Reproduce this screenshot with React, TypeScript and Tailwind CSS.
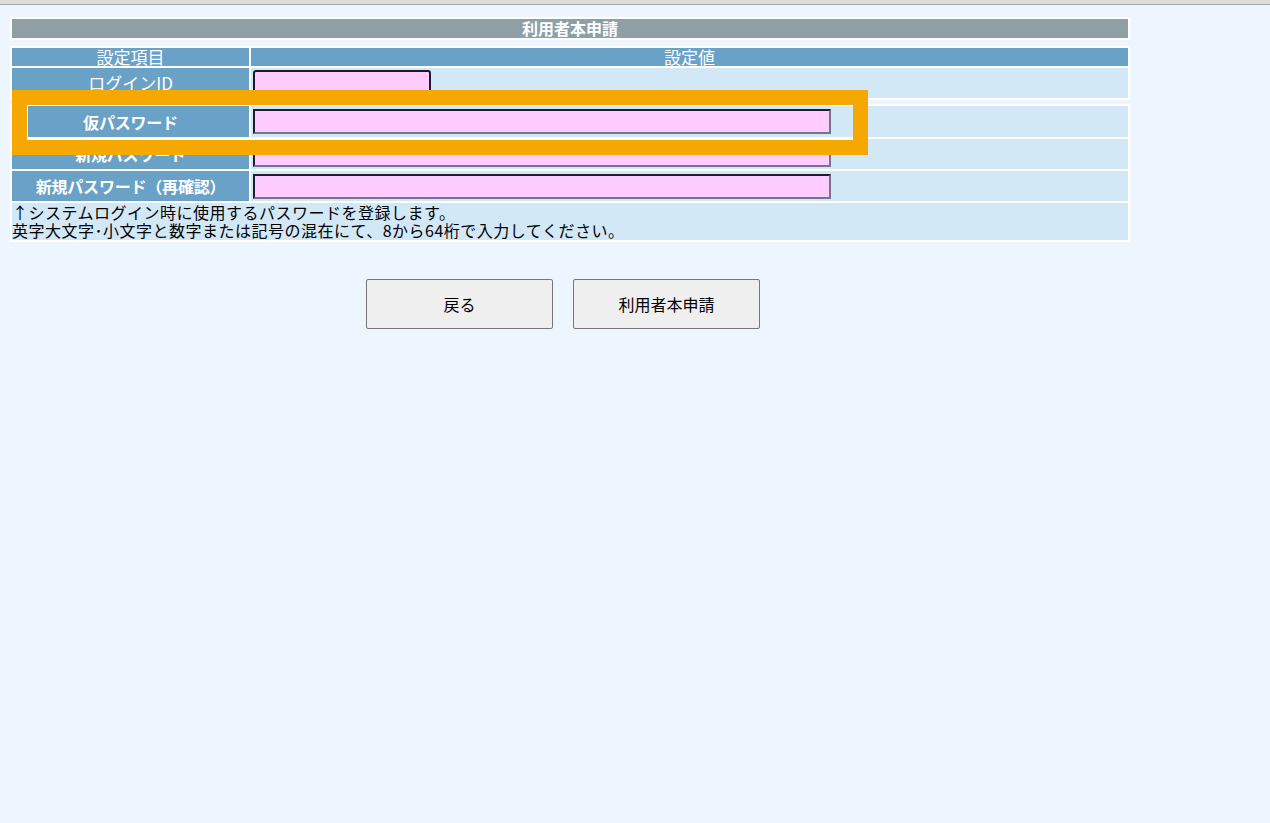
import React from "react";

const inputCls =
  "h-[25px] w-[578px] border-2 border-t-[#1e1e2e] border-l-[#1e1e2e] border-r-[#76768a] border-b-[#76768a] bg-[#ffccff] outline-none";

function Row({ label, h = "h-[30px]" }: { label: string; h?: string }) {
  return (
    <>
      <div
        className={`${h} bg-[#6aa1c7] flex items-center justify-center text-white font-bold text-[16px] leading-[18px] tracking-[-0.2px]`}
      >
        {label}
      </div>
      <div className={`${h} bg-[#d3e8f7] flex items-center pl-[2px]`}>
        <input type="password" className={inputCls} />
      </div>
    </>
  );
}

export default function App() {
  return (
    <div className="relative min-h-[823px] bg-[#edf6fe] font-['Noto_Sans_CJK_JP','Noto_Sans',sans-serif]">
      <div className="h-[4px] bg-[#dcdcdc]" />
      <div className="h-px bg-[#a9a9a9]" />
      <div className="pl-[10px] pt-[12px]">
        {/* title */}
        <div className="w-[1120px] bg-white p-[2px]">
          <div className="h-[19px] bg-[#8e9fa6] text-center text-white font-bold text-[16px] leading-[19px]">
            利用者本申請
          </div>
        </div>

        {/* header + login */}
        <div className="mt-[6px] w-[1120px] bg-white p-[2px] grid grid-cols-[237px_1fr] gap-[2px]">
          <div className="h-[18px] bg-[#6aa1c7] text-center text-white text-[17px] leading-[18px]">
            設定項目
          </div>
          <div className="h-[18px] bg-[#6aa1c7] text-center text-white text-[17px] leading-[18px]">
            設定値
          </div>
          <div className="h-[30px] bg-[#6aa1c7] flex items-center justify-center text-white text-[17px] leading-[18px]">
            ログインID
          </div>
          <div className="h-[30px] bg-[#d3e8f7] flex items-center pl-[2px]">
            <input
              type="text"
              className="h-[26px] w-[178px] rounded-[3px] border-2 border-[#1b1b2b] bg-[#ffccff] outline-none"
            />
          </div>
        </div>

        {/* passwords */}
        <div className="mt-[4px] w-[1120px] bg-white p-[2px] grid grid-cols-[237px_1fr] gap-[2px]">
          <Row label="仮パスワード" h="h-[31px]" />
          <Row label="新規パスワード" />
          <Row label="新規パスワード（再確認）" />
          <div className="col-span-2 h-[37px] bg-[#d3e8f7] text-black text-[16px] leading-[18px] tracking-[0.5px]">
            <div>↑システムログイン時に使用するパスワードを登録します。</div>
            <div>英字大文字･小文字と数字または記号の混在にて、8から64桁で入力してください。</div>
          </div>
        </div>

        {/* buttons */}
        <div className="mt-[37px] ml-[356px] flex gap-[20px]">
          <button className="h-[50px] w-[187px] rounded-[2px] border border-[#767676] bg-[#efefef] text-[16px] text-black">
            戻る
          </button>
          <button className="h-[50px] w-[187px] rounded-[2px] border border-[#767676] bg-[#efefef] text-[16px] text-black">
            利用者本申請
          </button>
        </div>
      </div>

      {/* highlight overlay */}
      <div className="pointer-events-none absolute left-[12px] top-[90px] h-[65px] w-[856px] border-[15px] border-[#f5a800]">
        <div className="h-full w-full border-l border-t border-b border-white" />
      </div>
    </div>
  );
}
